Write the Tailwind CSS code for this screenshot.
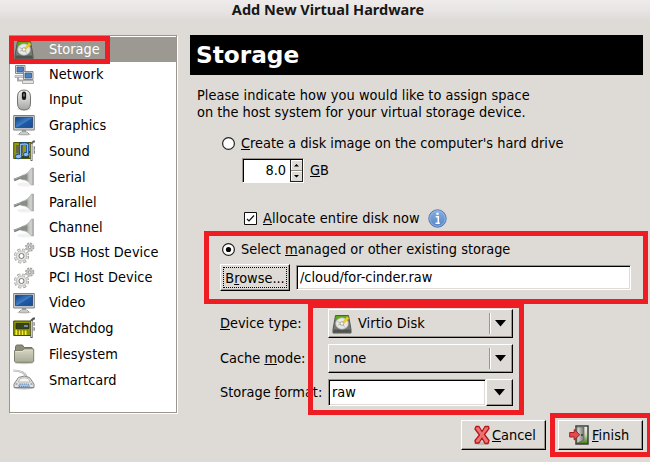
<!DOCTYPE html>
<html lang="en"><head><meta charset="utf-8"><title>Add New Virtual Hardware</title>
<script src="https://cdn.jsdelivr.net/npm/@tailwindcss/browser@4"></script></head>
<body class="relative w-[650px] h-[462px] overflow-hidden bg-[#dedbd6] text-black whitespace-nowrap text-[14.4px] leading-[17px] font-['DejaVu_Sans_Condensed','DejaVu_Sans',sans-serif]">
<svg class="absolute w-0 h-0">
<defs>
<linearGradient id="metal" x2="0" y2="1"><stop stop-color="#f5f5f3"/><stop offset="1" stop-color="#a4a6a2"/></linearGradient>
<linearGradient id="scr" x2="1" y2="1"><stop stop-color="#113d7e"/><stop offset=".5" stop-color="#3f7fc7"/><stop offset=".55" stop-color="#205ba5"/><stop offset="1" stop-color="#1b4c92"/></linearGradient>
<linearGradient id="cone"><stop stop-color="#8b8d89"/><stop offset=".8" stop-color="#d3d5d1"/><stop offset="1" stop-color="#9a9c98"/></linearGradient>
<linearGradient id="fold" x2="0" y2="1"><stop stop-color="#d6d6c6"/><stop offset="1" stop-color="#a9aa96"/></linearGradient>
<linearGradient id="info" x2="0" y2="1"><stop stop-color="#87aede"/><stop offset="1" stop-color="#5585c6"/></linearGradient>
<linearGradient id="door"><stop stop-color="#e4e5e2"/><stop offset="1" stop-color="#70726e"/></linearGradient>
<linearGradient id="out" x2="0" y2="1"><stop stop-color="#eef0f2"/><stop offset=".5" stop-color="#c8d8b0"/><stop offset="1" stop-color="#3c7a10"/></linearGradient>
</defs>
<symbol id="disk" viewBox="0 0 22 22"><path d="M4.500 2.500h13l2.500 14v3.500h-18v-3.500z" fill="#777a74" stroke="#555753"/><path d="M5 3h12.200l.6 4H4.500z" fill="#5fa61a"/><path d="M2.500 16.500h17v3H2.500z" fill="#50534f"/><ellipse cx="11" cy="10.500" rx="6.300" ry="5.700" fill="#e6e8e3" stroke="#b4b7b0" stroke-width=".7"/><path d="M7 12l4-1.500 3 4M6.500 8.500l4 2" stroke="#b9bcb6" fill="none"/><circle cx="11" cy="10.500" r="1.800" fill="#f8f8f6" stroke="#8d908a" stroke-width=".7"/><path d="M16 3.500l2 2-4.700 4.200-1.500-.3z" fill="#f4cd20" stroke="#d9a90b" stroke-width=".5"/></symbol>
<symbol id="net" viewBox="0 0 22 22"><path d="M5 12v4.500h5" fill="none" stroke="#aaa" stroke-width="2"/><path d="M2.500 1.500h9.500v8H2.500z" fill="#e7e8e5" stroke="#868882"/><path d="M4 3h6.500v5H4z" fill="#4d7fbe" stroke="#315b95" stroke-width=".8"/><path d="M2 11.500h9v2H2z" fill="#d6d7d3" stroke="#999" stroke-width=".6"/><path d="M10.500 7.500h9.500v8h-9.500z" fill="#e7e8e5" stroke="#868882"/><path d="M12 9h6.500v5H12z" fill="#4d7fbe" stroke="#315b95" stroke-width=".8"/><path d="M9.500 16.500h11v3h-11z" fill="#e4e5e1" stroke="#999" stroke-width=".8"/></symbol>
<symbol id="mouse" viewBox="0 0 22 22"><ellipse cx="11" cy="20" rx="7" ry="1.500" fill="#ddd"/><path d="M4.500 8q0-7 6.500-7t6.500 7v6q0 7-6.500 7t-6.500-7z" fill="url(#metal)" stroke="#737571"/><path d="M8 4.500V11l3 2 3-2V4.500" fill="none" stroke="#cfd0cd"/><rect x="8.900" y="2.500" width="4.200" height="8.500" rx="2.100" fill="#151515"/><path d="M10.300 4.500h1.400v3h-1.400z" fill="#858985"/></symbol>
<symbol id="screen" viewBox="0 0 22 22"><ellipse cx="11" cy="20.300" rx="7" ry="1.300" fill="#ccc"/><path d="M9 16h4v3H9z" fill="#aaa"/><path d="M6 20l2-2h6l2 2z" fill="#eee" stroke="#858782" stroke-width=".7"/><path d="M.7 1.500h20.600v14.500H.7z" fill="#d9dad6" stroke="#7d807a"/><path d="M2.500 3.200h17v10.500h-17z" fill="url(#scr)" stroke="#173e76" stroke-width=".8"/></symbol>
<symbol id="sound" viewBox="0 0 22 22"><path d="M.7 2.500H18v16H.7z" fill="#929a08" stroke="#4e5300"/><path d="M3 5h7v8H3z" fill="#68683e"/><path d="M6 17h10M13 12h4" stroke="#3c4000" stroke-width="2"/><path d="M18.500 21V3.500l2-2h1.500" stroke="#666" stroke-width="2" fill="none"/><path d="M18.500 20V4" stroke="#c7c9c5"/><path d="M20.500 7h1.500v2h-1.500M20.500 11h1.500v2h-1.500" stroke="#555" fill="none"/><path d="M7.500 16.500V4q5-1 7 0V14" stroke="#174c91" stroke-width="3" fill="none"/><ellipse cx="5.500" cy="16.500" rx="3.200" ry="2.300" fill="#90bdf0" stroke="#174c91"/><ellipse cx="13" cy="14.500" rx="2.800" ry="2.100" fill="#90bdf0" stroke="#174c91"/><path d="M7.500 16V4.500q5-1 7 0v9" stroke="#8cb9ed" stroke-width="1.300" fill="none"/></symbol>
<symbol id="serial" viewBox="0 0 22 22"><ellipse cx="12" cy="18.500" rx="8" ry="2" fill="#f1f1f1"/><path d="M1 14q5-2 9-3.500" stroke="#797c77" stroke-width="2.600" fill="none"/><path d="M1 13.500q5-2 9-3.500" stroke="#b8bab6" stroke-width=".8" fill="none"/><path d="M9 9.500q6-1.500 9.500-7.500h2v17h-2Q15 14 9 13.500z" fill="url(#cone)" stroke="#a1a39f" stroke-width=".6"/><path d="M7.500 10.500q4-1 7-2.500v6q-3-1-7-.5z" fill="#898c87"/></symbol>
<symbol id="gears" viewBox="0 0 22 22"><g fill="none"><circle cx="8.500" cy="14" r="6.300" stroke="#9a9c98" stroke-width="2.600" stroke-dasharray="3 1.950"/><circle cx="8.500" cy="14" r="6" stroke="#e2e3e1" stroke-width="1.800" stroke-dasharray="2.200 2.510" stroke-dashoffset="-.4"/><circle cx="8.500" cy="14" r="5.100" fill="#e2e3e1" stroke="#b4b6b2" stroke-width=".7"/><circle cx="8.500" cy="14" r="2.500" fill="white" stroke="#777975"/><circle cx="16.700" cy="5.200" r="3.800" stroke="#a3a5a1" stroke-width="1.800" stroke-dasharray="2 .98"/><circle cx="16.700" cy="5.200" r="3.200" stroke="#b3b5b1" stroke-width=".7" fill="#cdcecb"/><circle cx="16.700" cy="5.200" r="1.400" fill="#eee" stroke="#858783" stroke-width=".8"/></g></symbol>
<symbol id="card" viewBox="0 0 22 22"><path d="M.7 4h17.500v14.500H.7z" fill="#8e9700" stroke="#444900"/><path d="M3 6.500h13v5H3z" fill="#37421f" stroke="#202713" stroke-width=".7"/><path d="M11 8h4v2h-4z" fill="#7889a0"/><path d="M3.500 13v5M6.500 13v5M9.500 13v5M12.500 13v5" stroke="#f5ed35" stroke-width="2"/><path d="M4 13h11M5 13v5M8 13v5M11 13v5" stroke="#586000" stroke-width=".6" fill="none"/><path d="M18.500 21V3.500l2-2h1.500" stroke="#555" stroke-width="2.200" fill="none"/><path d="M18.500 20V4" stroke="#c7c9c5"/><path d="M20 6h2v2h-2M20 11h2v2h-2" stroke="#777" fill="none"/></symbol>
<symbol id="folder" viewBox="0 0 22 22"><ellipse cx="11" cy="20" rx="9" ry="1.200" fill="#ccc"/><path d="M2.500 18V3.500l1-1.500h6l1.500 2.500h8l.5 1.500v12z" fill="#8e8f7b" stroke="#71725f"/><path d="M1.500 7.500H9l2-1.500h9.700v12.500l-1 .8H2.500l-1-.8z" fill="url(#fold)" stroke="#80816e"/><path d="M2.500 8.500h7l2-1.500h8" stroke="#e8e8dc" stroke-width=".7" fill="none"/></symbol>
<symbol id="smart" viewBox="0 0 22 22"><path d="M.5 1.500Q12 2 13.500 8" fill="none" stroke="#a9aba7" stroke-width="2"/><path d="M1 1.500Q12 2 13.500 8" fill="none" stroke="#e2e3e0"/><ellipse cx="11" cy="19" rx="10" ry="1.500" fill="#bbb"/><path d="M5.500 8.500q6-3 11 0l4.500 6.500v3.500H1V15z" fill="#e3e4e1" stroke="#838681"/><path d="M5 13l2.500-3.500q4-1.500 7.500 0l2.500 3.500z" fill="#f5f5f4" stroke="#a6a8a4" stroke-width=".7"/><path d="M6.500 15h9l1 2.500h-11z" fill="#a9c6e8" stroke="#527fb6" stroke-width=".9" stroke-dasharray="1.300 .8"/><path d="M2.500 15h2M17.500 15h2" stroke="#777"/></symbol>
</svg>

<header class="h-[20px] bg-linear-to-b from-[#efebeb] via-[#e8e5e5] to-[#dedbd9] flex justify-center text-[14.5px] leading-[18px] pl-[6px] font-bold text-[#171717] font-['Noto_Sans',sans-serif]"><span>Add New Virtual Hardware</span></header>

<div class="flex pt-[15px]">
<nav class="ml-[9px] w-[168px] h-[378px] border border-[#9b958f] bg-white pt-px shadow-[1px_1px_0_white]">
<ul class="tracking-[0.06px]">
<li class="h-[25px] flex items-center gap-[14px] pl-[3px] bg-[#9c9892] text-white tracking-normal"><svg class="size-[22px]"><use href="#disk"/></svg>Storage</li>
<li class="h-[25px] flex items-center gap-[14px] pl-[3px]"><svg class="size-[22px]"><use href="#net"/></svg>Network</li>
<li class="h-[25px] flex items-center gap-[14px] pl-[3px] tracking-normal"><svg class="size-[22px]"><use href="#mouse"/></svg>Input</li>
<li class="h-[26px] flex items-center gap-[14px] pl-[3px] tracking-normal"><svg class="size-[22px]"><use href="#screen"/></svg>Graphics</li>
<li class="h-[26px] flex items-center gap-[14px] pl-[3px] tracking-normal"><svg class="size-[22px]"><use href="#sound"/></svg>Sound</li>
<li class="h-[26px] flex items-center gap-[14px] pl-[3px] tracking-normal"><svg class="size-[22px]"><use href="#serial"/></svg>Serial</li>
<li class="h-[25px] flex items-center gap-[14px] pl-[3px]"><svg class="size-[22px]"><use href="#serial"/></svg>Parallel</li>
<li class="h-[25px] flex items-center gap-[14px] pl-[3px]"><svg class="size-[22px]"><use href="#serial"/></svg>Channel</li>
<li class="h-[25px] flex items-center gap-[14px] pl-[3px]"><svg class="size-[22px]"><use href="#gears"/></svg>USB Host Device</li>
<li class="h-[25px] flex items-center gap-[14px] pl-[3px]"><svg class="size-[22px]"><use href="#gears"/></svg>PCI Host Device</li>
<li class="h-[25px] flex items-center gap-[14px] pl-[3px]"><svg class="size-[22px]"><use href="#screen"/></svg>Video</li>
<li class="h-[26px] flex items-center gap-[14px] pl-[3px] tracking-normal"><svg class="size-[22px]"><use href="#card"/></svg>Watchdog</li>
<li class="h-[26px] flex items-center gap-[14px] pl-[3px]"><svg class="size-[22px]"><use href="#folder"/></svg>Filesystem</li>
<li class="h-[26px] flex items-center gap-[14px] pl-[3px] tracking-normal"><svg class="size-[22px]"><use href="#smart"/></svg>Smartcard</li>
</ul>
</nav>

<main class="ml-[13px] w-[453px]">
<h1 class="h-[40px] bg-black text-white font-bold text-[23.2px] leading-[40px] pl-[6px] font-['DejaVu_Sans',sans-serif]">Storage</h1>
<p class="pt-[12px] pl-[7px] tracking-[0.05px]">Please indicate how you would like to assign space<br><span class="tracking-[-0.01px]">on the host system for your virtual storage device.</span></p>
<div class="mt-[13px] ml-[32px] h-[19px] flex items-center gap-[6px]"><svg class="size-[13px]"><circle cx="6.500" cy="6.500" r="5.900" fill="white" stroke="#222" stroke-width="1.200"/></svg><span><u>C</u>reate a disk image on the computer's hard drive</span></div>
<div class="mt-[5px] ml-[52px] h-[25px] flex items-center gap-[6px]">
<div class="w-[62px] h-[25px] flex border border-[#9b958f] border-r-white border-b-white bg-white shadow-[inset_1px_1px_0_black] pt-px"><span class="grow text-right pr-[4px] leading-[21px]">8.0</span>
<svg class="w-[13px] h-[22px] shrink-0" viewBox="0 0 13 22"><path d="M0 0h13v22H0z" fill="#dedbd6"/><path d="M1.500 10V.5H12M1.500 20v-8.500H12" stroke="white" fill="none"/><path d="M.5 0v22M12.500 0v22M0 21.500h13" stroke="#222"/><path d="M1 10.500h11" stroke="#8c8882"/><path d="M4 6.500h5L6.500 4zM4 15h5L6.500 17.500z"/></svg></div><span><u>G</u>B</span></div>
<div class="mt-[25px] ml-[54px] h-[20px] flex items-center"><svg class="size-[13px]" viewBox="0 0 13 13"><path d="M.5.5h12v12H.5z" fill="white" stroke="#111"/><path d="M3 7l2 2 5-5.500" fill="none" stroke="#111" stroke-width="1.200"/></svg><span class="ml-[6px] tracking-[0.07px]"><u>A</u>llocate entire disk now</span><svg class="ml-[8px] size-[19px]" viewBox="0 0 19 19"><circle cx="9.500" cy="9.500" r="8.700" fill="url(#info)" stroke="#4b79b8"/><circle cx="9.500" cy="9.500" r="7.700" fill="none" stroke="#9fbfe6" stroke-width=".7"/><path d="M7.700 7.800h2.600v6.500M7.500 14.200h4.300" stroke="white" stroke-width="1.500" fill="none"/><circle cx="9.500" cy="4.700" r="1.300" fill="white"/></svg></div>
<div class="mt-[11px] ml-[32px] h-[20px] flex items-center gap-[6px]"><svg class="size-[13px]"><circle cx="6.500" cy="6.500" r="5.900" fill="white" stroke="#222" stroke-width="1.200"/><circle cx="6.500" cy="6.500" r="2.600"/></svg><span>Select <u>m</u>anaged or other existing storage</span></div>
<div class="mt-[5px] ml-[30px] flex gap-[6px]">
<button class="w-[70px] h-[27px] bg-[#dedbd6] border border-white border-r-black border-b-black shadow-[inset_-1px_-1px_0_#9b958f] p-[2px]"><span class="block h-[21px] leading-[20px] border border-dotted border-black"><span>B<u>r</u>owse...</span></span></button>
<div class="mt-px w-[335px] h-[25px] bg-white border border-[#9b958f] border-r-white border-b-white shadow-[inset_1px_1px_0_black,inset_-1px_-1px_0_#dedbd6] pl-[3px] leading-[23px]">/cloud/for-cinder.raw</div>
</div>
<div class="mt-[18px] ml-[30px] grid grid-cols-[108px_185px] grid-rows-[29px_29px_27px] gap-y-[6px] items-center">
<label><u>D</u>evice type:</label>
<div class="h-[29px] flex items-center border border-white border-r-black border-b-black shadow-[inset_-1px_-1px_0_#9b958f]"><svg class="ml-[2px] size-[22px]"><use href="#disk"/></svg><span class="ml-[5px] grow tracking-[0.08px]">Virtio Disk</span><i class="w-[2px] h-[21px] border-l border-[#9b958f] bg-white"></i><svg class="ml-[4px] mr-[6px] w-[11px] h-[7px]"><path d="M0 0h11L5.500 6.500z"/></svg></div>
<label>Cache <u>m</u>ode:</label>
<div class="h-[29px] flex items-center border border-white border-r-black border-b-black shadow-[inset_-1px_-1px_0_#9b958f]"><span class="ml-[5px] grow">none</span><i class="w-[2px] h-[21px] border-l border-[#9b958f] bg-white"></i><svg class="ml-[4px] mr-[6px] w-[11px] h-[7px]"><path d="M0 0h11L5.500 6.500z"/></svg></div>
<label>Storage <u>f</u>ormat:</label>
<div class="h-[27px] flex"><div class="w-[158px] bg-white border border-[#9b958f] border-r-white border-b-white shadow-[inset_1px_1px_0_black,inset_-1px_-1px_0_#dedbd6] pl-[3px] leading-[25px]">raw</div><div class="grow flex items-center justify-center border border-white border-r-black border-b-black shadow-[inset_-1px_-1px_0_#9b958f]"><svg class="w-[11px] h-[7px]"><path d="M0 0h11L5.500 6.500z"/></svg></div></div>
</div>
<div class="mt-[14px] flex justify-end gap-[12px]">
<button class="w-[85px] h-[30px] flex items-center pl-[11px] gap-[1px] border border-white border-r-black border-b-black shadow-[inset_-1px_-1px_0_#9b958f]"><svg class="w-[18px] h-[20px] shrink-0" viewBox="0 0 18 20"><ellipse cx="9" cy="18.500" rx="8" ry="1.500" fill="#bfbbb6"/><path d="M3 1.500l3 0 3 5 3-5h3.500l.5 2-4.500 6 4.500 6-1 3h-3L9 13l-3 5H2.500l-.5-2.500L6.500 10 2 4z" fill="#ee7272" stroke="#b4191e" stroke-width="1.300" stroke-linejoin="round"/></svg><span><u>C</u>ancel</span></button>
<button class="w-[85px] h-[30px] flex items-center pl-[10px] gap-[3px] border border-white border-r-black border-b-black shadow-[inset_-1px_-1px_0_#9b958f]"><svg class="w-[20px] h-[20px] shrink-0" viewBox="0 0 20 20"><path d="M7 1h12v18H7z" fill="url(#out)" stroke="#3e403c" stroke-width="1.500"/><path d="M8 2h7v13l-7 3z" fill="url(#door)" stroke="#666" stroke-width=".7"/><circle cx="13" cy="10" r="1" fill="#333"/><path d="M.7 7.500h4.500V4.500l5.500 5.300-5.500 5.200v-3H.7z" fill="#df4d50" stroke="#a81b20"/></svg><span class="tracking-[0.1px]"><u>F</u>inish</span></button>
</div>
</main>
</div>

<div class="absolute left-[9px] top-[36px] w-[101px] h-[28px] border-5 border-[#ee1c23]"></div>
<div class="absolute left-[204px] top-[231px] w-[444px] h-[73px] border-5 border-[#ee1c23]"></div>
<div class="absolute left-[308px] top-[303px] w-[216px] h-[112px] border-5 border-[#ee1c23]"></div>
<div class="absolute left-[550px] top-[413px] w-[102px] h-[44px] border-5 border-[#ee1c23]"></div>
</body></html>
